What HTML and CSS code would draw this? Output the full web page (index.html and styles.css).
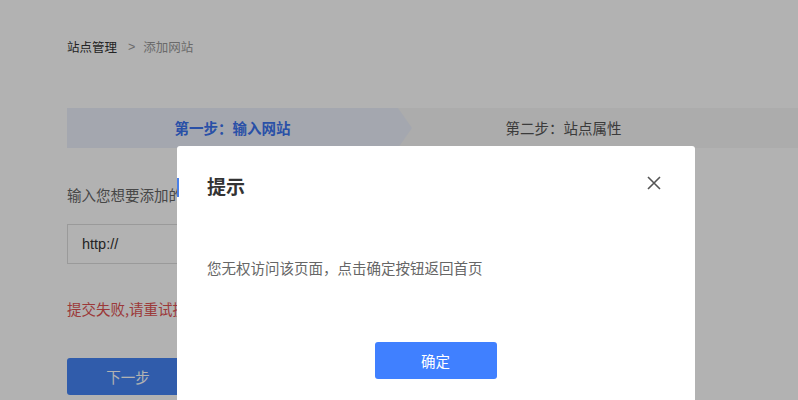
FILE: index.html
```html
<!DOCTYPE html>
<html lang="zh-CN">
<head>
<meta charset="utf-8">
<title>添加网站</title>
<link rel="stylesheet" href="styles.css">
</head>
<body>
<div class="page">
  <div class="crumbs">
    <span class="crumb-main">站点管理</span>
    <span class="crumb-sep">&gt;</span>
    <span class="crumb-cur">添加网站</span>
  </div>
  <div class="steps">
    <div class="step active">第一步：输入网站</div>
    <div class="step">第二步：站点属性</div>
  </div>
  <div class="form">
    <div class="label">输入您想要添加的网站地址</div>
    <div class="input">http://</div>
    <div class="error">提交失败,请重试提交</div>
    <button class="next">下一步</button>
  </div>
</div>
<div class="mask"></div>
<div class="modal">
  <span class="accent"></span>
  <div class="modal-head">
    <span class="modal-title">提示</span>
    <svg class="close" width="14" height="14" viewBox="0 0 14 14"><path d="M1 1L13 13M13 1L1 13" stroke="#555" stroke-width="1.6" fill="none"/></svg>
  </div>
  <div class="modal-body">您无权访问该页面，点击确定按钮返回首页</div>
  <div class="modal-foot"><button class="ok">确定</button></div>
</div>
</body>
</html>
```
FILE: styles.css
```css
html, body {
  margin: 0;
  padding: 0;
  background: #fff;
  font-family: "Noto Sans CJK SC", "Noto Sans", sans-serif;
  color: #333;
  overflow: hidden;
  height: 400px;
}
.page {
  padding: 37px 0 0 67px;
}
.crumbs {
  display: flex;
  align-items: center;
  font-size: 12.5px;
  line-height: 20px;
  height: 20px;
}
.crumb-main { color: #333; }
.crumb-sep { color: #999; margin: 0 8px 0 11px; font-family: "Liberation Sans", sans-serif; }
.crumb-cur { color: #999; }
.steps {
  margin-top: 51px;
  height: 40px;
  background: #f6f6f6;
  display: grid;
  grid-template-columns: 331px 331px;
}
.step {
  font-size: 14.5px;
  line-height: 40px;
  text-align: center;
  color: #555;
  position: relative;
}
.step.active {
  background: #ebf0fb;
  color: #3b73f0;
  font-weight: bold;
}
.step.active::after {
  content: "";
  position: absolute;
  right: -14px;
  top: 0;
  border-top: 20px solid transparent;
  border-bottom: 20px solid transparent;
  border-left: 14px solid #ebf0fb;
}
.form {
  padding-top: 37px;
}
.label {
  font-size: 14.5px;
  line-height: 20px;
  color: #666;
}
.input {
  margin-top: 19px;
  width: 420px;
  height: 40px;
  box-sizing: border-box;
  border: 1px solid #ddd;
  padding-left: 14px;
  font-family: "Liberation Sans", sans-serif;
  font-size: 14.5px;
  line-height: 38px;
  color: #333;
}
.error {
  margin-top: 35px;
  font-size: 14.5px;
  line-height: 20px;
  color: #e05252;
}
.next {
  margin-top: 39px;
  width: 122px;
  height: 37px;
  border: 0;
  border-radius: 3px;
  background: #4585f5;
  color: #fff;
  font-family: inherit;
  font-size: 14.5px;
}
.mask {
  position: fixed;
  inset: 0;
  background: rgba(0, 0, 0, 0.3);
}
.modal {
  position: absolute;
  left: 177px;
  top: 146px;
  width: 518px;
  height: 300px;
  background: #fff;
  border-radius: 3px;
  box-sizing: border-box;
  padding: 28px 34px 0 30px;
}
.accent {
  position: absolute;
  left: 0;
  top: 32px;
  width: 2px;
  height: 19px;
  background: #4a80e8;
}
.modal-head {
  display: flex;
  justify-content: space-between;
  align-items: center;
  height: 24px;
}
.modal-title {
  font-size: 19px;
  font-weight: bold;
  color: #333;
  line-height: 24px;
}
.close {
  display: block;
  margin-top: -6px;
}
.modal-body {
  margin-top: 58px;
  font-size: 14.5px;
  line-height: 24px;
  color: #666;
}
.modal-foot {
  margin-top: 62px;
  display: flex;
  justify-content: center;
  padding-left: 3px;
}
.ok {
  width: 122px;
  height: 37px;
  border: 0;
  border-radius: 3px;
  background: #4080ff;
  color: #fff;
  font-family: inherit;
  font-size: 14.5px;
}
```
